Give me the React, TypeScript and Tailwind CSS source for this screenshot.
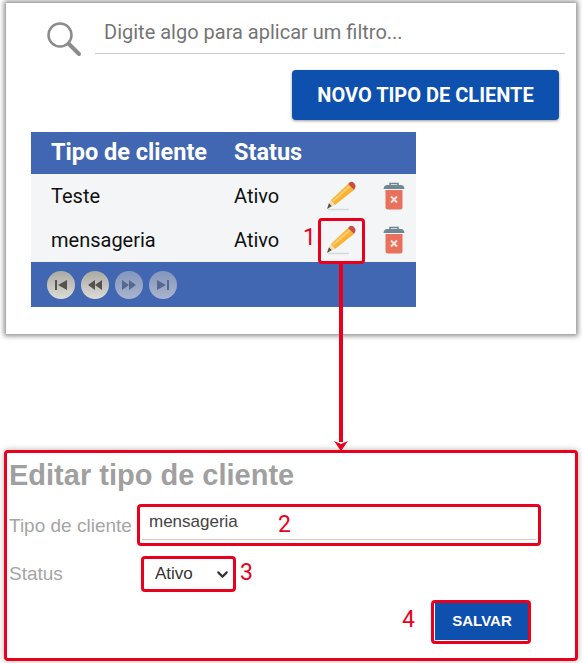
import React from 'react';
import { ChevronDown } from 'lucide-react';

const PencilIcon = () => (
  <svg width="30" height="30" viewBox="0 0 30 30">
    <path d="M2 28.5 H23" stroke="#d5dcd6" strokeWidth="1.5" />
    <path d="M6 25 L1 28 L3 22 Z" fill="#5b5348" />
    <path d="M3 22 L6 25 L9 24 L5 19 Z" fill="#f6dcae" />
    <path d="M5 19 L22 3 L28 9 L9 24 Z" fill="#f9b233" />
    <path d="M7 20 L24 5" stroke="#f7cf6e" strokeWidth="2" />
    <path d="M22 3 L24 1 Q26 0 28 2 Q30 4 29.500 6 L28 9 Z" fill="#c9503f" />
  </svg>
);

const TrashIcon = () => (
  <svg width="22" height="28" viewBox="0 0 22 28">
    <path d="M7 3 V1.500 H15 V3" fill="none" stroke="#6f8791" strokeWidth="1.600" />
    <path d="M0.500 7 Q1 3 4 3 H18 Q21 3 21.500 7 Z" fill="#6f8791" />
    <path d="M2.500 8 H19.500 V25 Q19.500 27.500 17 27.500 H5 Q2.500 27.500 2.500 25 Z" fill="#e8705c" />
    <path d="M8 14.500 L14 20.500 M14 14.500 L8 20.500" stroke="#fbe6e0" strokeWidth="2" />
  </svg>
);

const PagerButton = ({ d, dim }: { d: string; dim?: boolean }) => (
  <div className={`w-[28px] h-[28px] rounded-full flex items-center justify-center bg-gradient-to-b ${dim ? 'from-[#8496bd] to-[#a9b4cd]' : 'from-[#aaa9a4] to-[#dcdbd5]'}`}>
    <svg width="14" height="10" viewBox="0 0 14 10">
      <path d={d} fill={dim ? '#56688e' : '#55534e'} />
    </svg>
  </div>
);

const rows = ['Teste', 'mensageria'];

export default function App() {
  return (
    <div className="relative w-[582px] h-[663px] bg-white overflow-hidden font-['Roboto',sans-serif]">
      {/* painel de cima */}
      <div className="ml-[6px] mr-[6px] pt-[3px]">
        <div className="h-[331px] bg-white shadow-[0_0_5px_2px_rgba(0,0,0,0.45)] pl-[25px] pr-[11px]">
          <div className="flex items-start h-[67px]">
            <svg width="36" height="36" viewBox="0 0 36 36" className="ml-[15px] mt-[18px] shrink-0">
              <circle cx="14" cy="14" r="11.500" fill="none" stroke="#8c8c8c" strokeWidth="2.500" />
              <path d="M23 23 L33 33" stroke="#8c8c8c" strokeWidth="4" strokeLinecap="round" />
            </svg>
            <div className="ml-[13px] flex-1 h-[51px] border-b border-[#cccccc] pl-[9px] pt-[17px] text-[20px] leading-[24px] text-[#757575]">
              Digite algo para aplicar um filtro...
            </div>
          </div>
          <div className="flex justify-end pr-[6px]">
            <button className="w-[267px] h-[50px] bg-[#0d50ae] rounded-[4px] text-white font-bold text-[20px] shadow-[0_1px_3px_rgba(0,0,0,0.4)]">
              NOVO TIPO DE CLIENTE
            </button>
          </div>
          <div className="w-[385px] mt-[12px]">
            <div className="h-[42px] bg-[#4267b2] flex items-center pl-[20px] text-white font-bold text-[23.500px]">
              <div className="w-[183px]">Tipo de cliente</div>
              <div>Status</div>
            </div>
            <div className="bg-[#f3f5f7]">
              {rows.map((name) => (
                <div key={name} className="h-[44px] flex items-center pl-[20px] text-[20px] text-[#111111]">
                  <div className="w-[183px]">{name}</div>
                  <div className="w-[92px]">Ativo</div>
                  <div className="w-[57px]"><PencilIcon /></div>
                  <TrashIcon />
                </div>
              ))}
            </div>
            <div className="h-[45px] bg-[#4267b2] flex items-center gap-[6px] pl-[16px]">
              <PagerButton d="M1 0 H3 V10 H1 Z M13 0 V10 L4 5 Z" />
              <PagerButton d="M7 0 V10 L0 5 Z M14 0 V10 L7 5 Z" />
              <PagerButton dim d="M0 0 L7 5 L0 10 Z M7 0 L14 5 L7 10 Z" />
              <PagerButton dim d="M1 0 L10 5 L1 10 Z M11 0 H13 V10 H11 Z" />
            </div>
          </div>
        </div>
      </div>

      {/* formulario de edicao */}
      <div className="mt-[116px] mx-[4px] h-[211px] border-[3px] border-[#e8001c] rounded-[4px] bg-white pl-[2px] shadow-[0_0_6px_rgba(0,0,0,0.3)] font-['Liberation_Sans',sans-serif]">
        <div className="text-[29px] leading-[32px] font-bold text-[#a0a0a0] mt-[6px]">Editar tipo de cliente</div>
        <div className="flex items-center mt-[17px] h-[36px]">
          <div className="w-[133px] text-[19px] text-[#a5a5a5]">Tipo de cliente</div>
          <div className="w-[394px] h-[32px] self-start border-b border-[#cccccc] pl-[7px] text-[17px] text-[#444444] leading-[28px]">mensageria</div>
        </div>
        <div className="flex items-center mt-[12px] h-[36px]">
          <div className="w-[133px] text-[19px] text-[#a5a5a5]">Status</div>
          <div className="w-[95px] flex items-center pl-[13px] text-[17px] text-[#333333]">
            Ativo
            <ChevronDown size={17} strokeWidth={3} className="ml-[21px] text-[#333333]" />
          </div>
        </div>
        <div className="flex justify-end pr-[46px] mt-[10px]">
          <button className="w-[94px] h-[38px] bg-[#0d50ae] text-white font-bold text-[15px]">SALVAR</button>
        </div>
      </div>

      {/* marcacoes vermelhas */}
      <div className="absolute left-[318px] top-[218px] w-[47px] h-[46px] border-[3px] border-[#e8001c] rounded-[4px]" />
      <div className="absolute left-[339px] top-[264px] w-[4px] h-[178px] bg-[#e8001c]" />
      <svg width="14" height="10" viewBox="0 0 14 10" className="absolute left-[334px] top-[441px]">
        <path d="M0 0 L7 10 L14 0 L7 3 Z" fill="#e8001c" />
      </svg>
      <div className="absolute left-[137px] top-[504px] w-[404px] h-[42px] border-[3px] border-[#e8001c] rounded-[4px]" />
      <div className="absolute left-[141px] top-[556px] w-[95px] h-[36px] border-[3px] border-[#e8001c] rounded-[4px]" />
      <div className="absolute left-[431px] top-[600px] w-[100px] h-[44px] border-[3px] border-[#e8001c] rounded-[4px]" />
      <span className="absolute left-[303px] top-[225px] text-[23px] leading-[26px] text-[#e8001c]">1</span>
      <span className="absolute left-[278px] top-[512px] text-[23px] leading-[26px] text-[#e8001c]">2</span>
      <span className="absolute left-[240px] top-[560px] text-[23px] leading-[26px] text-[#e8001c]">3</span>
      <span className="absolute left-[402px] top-[607px] text-[23px] leading-[26px] text-[#e8001c]">4</span>
    </div>
  );
}
